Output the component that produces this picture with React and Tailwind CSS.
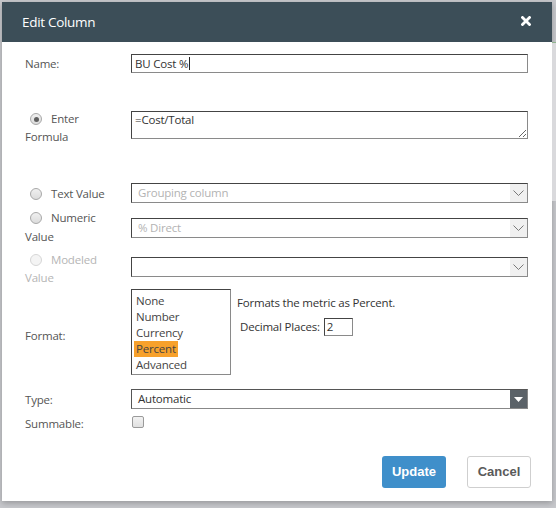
import React from 'react';

const font = { fontFamily: '"Open Sans", "Noto Sans", sans-serif' };

const Radio = ({ checked, disabled }) => (
  <span
    className={`inline-block w-[12px] h-[12px] rounded-full border align-[-2px] ml-[5px] mr-[9px] ${
      disabled ? 'border-[#d6d6d6] bg-[#f4f4f4]' : 'border-[#a8a8a8] bg-[linear-gradient(#f0f0f0,#dcdcdc)]'
    } flex-none relative`}
  >
    {checked && <span className="absolute left-[2.5px] top-[2.5px] w-[5px] h-[5px] rounded-full bg-[#5f5f5f]" />}
  </span>
);

const Chevron = () => (
  <svg width="11" height="6" viewBox="0 0 11 6">
    <path d="M0.5 0.5 L5.5 5.5 L10.5 0.5" fill="none" stroke="#6b6b6b" strokeWidth="0.9" />
  </svg>
);

const LightSelect = ({ value, muted }) => (
  <div className="h-[20px] w-[397px] flex border border-[#444] border-r-[#8a8a8a] border-b-[#8a8a8a] bg-white">
    <div className={`flex-1 pl-[6px] leading-[18px] ${muted ? 'text-[#b3b3b3]' : 'text-[#333]'}`}>{value}</div>
    <div className="w-[17px] bg-[#f0f0f0] flex items-center justify-center">
      <Chevron />
    </div>
  </div>
);

const App = () => {
  return (
    <div className="w-[556px] h-[508px] bg-[#c7c8cc] pt-[2px] pl-[2px] overflow-hidden flex" style={font}>
      <div className="w-[550px] h-[499px] bg-white flex-none flex flex-col shadow-[0_2px_6px_rgba(0,0,0,0.25)]">
        {/* header */}
        <div className="h-[40px] bg-[#3c4e58] flex items-center justify-between pl-[20px] pr-[21px]">
          <span className="text-white text-[13.5px] tracking-[-0.3px]">Edit Column</span>
          <svg width="10" height="10" viewBox="0 0 10 10" className="mb-[2px]">
            <path d="M1.5 1.5 L8.5 8.5 M8.5 1.5 L1.5 8.5" stroke="#fff" strokeWidth="2.8" strokeLinecap="square" />
          </svg>
        </div>

        <div className="pl-[23px] text-[11.5px] tracking-[-0.2px] text-[#555] flex flex-col">
          {/* name */}
          <div className="flex mt-[12px]">
            <div className="w-[106px] leading-[19px]">Name:</div>
            <div className="h-[19px] w-[397px] border border-[#444] border-r-[#8a8a8a] border-b-[#8a8a8a] pl-[3px] leading-[17px] text-[#333] flex items-center">
              BU Cost %<span className="inline-block w-px h-[13px] bg-[#222] ml-[1px]" />
            </div>
          </div>

          {/* formula */}
          <div className="flex mt-[37px]">
            <div className="w-[106px] leading-[18px]">
              <span className="flex items-center">
                <Radio checked />
                Enter
              </span>
              Formula
            </div>
            <textarea
              readOnly
              defaultValue="=Cost/Total"
              className="mt-[1px] h-[28px] w-[397px] border border-[#444] border-r-[#8a8a8a] border-b-[#8a8a8a] px-[3px] text-[11.5px] tracking-[-0.2px] leading-[16px] text-[#333] outline-none"
              style={font}
            />
          </div>

          {/* text value */}
          <div className="flex mt-[37px]">
            <div className="w-[106px] leading-[19px] pt-[1px] flex items-center h-[20px]">
              <Radio />
              Text Value
            </div>
            <LightSelect value="Grouping column" muted />
          </div>

          {/* numeric */}
          <div className="flex mt-[5px]">
            <div className="w-[106px] leading-[19px]">
              <span className="flex items-center">
                <Radio />
                Numeric
              </span>
              Value
            </div>
            <div className="mt-[10px]">
              <LightSelect value="% Direct" muted />
            </div>
          </div>

          {/* modeled */}
          <div className="flex mt-[5px]">
            <div className="w-[106px] leading-[18px] text-[#b5b5b5]">
              <span className="flex items-center">
                <Radio disabled />
                Modeled
              </span>
              Value
            </div>
            <div className="mt-[6px]">
              <LightSelect value="" />
            </div>
          </div>

          {/* format */}
          <div className="flex mt-[2px]">
            <div className="w-[106px] leading-[19px] pt-[37px]">Format:</div>
            <div className="w-[100px] h-[86px] border border-[#444] border-r-[#8a8a8a] border-b-[#8a8a8a] pt-[3px] pl-[2px] leading-[16px] text-[#444] flex flex-col items-start">
              <span className="px-[2px]">None</span>
              <span className="px-[2px]">Number</span>
              <span className="px-[2px]">Currency</span>
              <span className="px-[2px] bg-[#f7a12c]">Percent</span>
              <span className="px-[2px]">Advanced</span>
            </div>
            <div className="pl-[6px] text-[#333]">
              <div className="leading-[19px] mt-[4px]">Formats the metric as Percent.</div>
              <div className="flex items-center mt-[6px] pl-[3px]">
                <span>Decimal Places:</span>
                <div className="ml-[4px] w-[29px] h-[18px] border border-[#444] border-r-[#8a8a8a] border-b-[#8a8a8a] pl-[2px] leading-[16px]">
                  2
                </div>
              </div>
            </div>
          </div>

          {/* type */}
          <div className="flex mt-[14px]">
            <div className="w-[106px] leading-[19px] pt-[1px]">Type:</div>
            <div className="h-[20px] w-[397px] flex border border-[#555] border-r-[#888] border-b-[#888]">
              <div className="flex-1 pl-[6px] leading-[18px] text-[#333]">Automatic</div>
              <div className="w-[17px] bg-[#5b6268] flex items-center justify-center">
                <svg width="9" height="5" viewBox="0 0 9 5">
                  <path d="M0 0 L9 0 L4.5 5 Z" fill="#fff" />
                </svg>
              </div>
            </div>
          </div>

          {/* summable */}
          <div className="flex mt-[5px]">
            <div className="w-[106px] leading-[19px]">Summable:</div>
            <span className="mt-[2px] ml-[1px] w-[12px] h-[12px] rounded-[2px] border border-[#9a9a9a] bg-[linear-gradient(#f2f2f2,#e0e0e0)]" />
          </div>

          {/* buttons */}
          <div className="flex justify-end mt-[23px] pr-[21px] gap-[21px] tracking-normal" style={{ fontFamily: '"Liberation Sans", Arial, sans-serif' }}>
            <button className="w-[64px] h-[32px] rounded-[3px] bg-[#3f8fca] text-white font-bold text-[13px]">Update</button>
            <button className="w-[64px] h-[32px] rounded-[3px] bg-white border border-[#cfcfcf] text-[#5a5a5a] font-bold text-[13px]">
              Cancel
            </button>
          </div>
        </div>
      </div>
      {/* background strip on the right */}
      <div className="flex-1 flex flex-col">
        <div className="h-[40px]" />
        <div className="h-[1px] bg-[#8fb38f]" />
        <div className="h-[158px] bg-[#d9d9dc]" />
      </div>
    </div>
  );
};

export default App;
